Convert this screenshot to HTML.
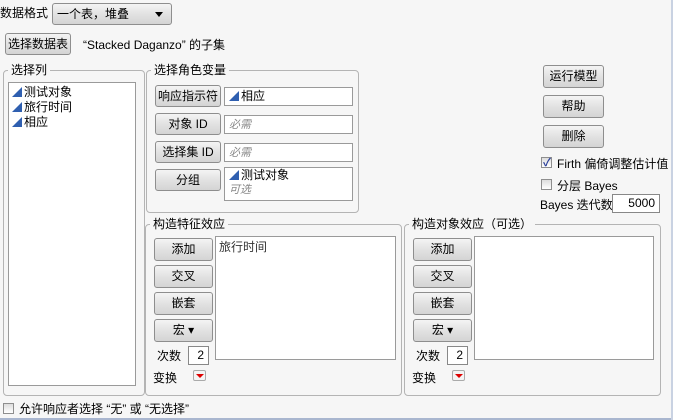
<!DOCTYPE html>
<html><head><meta charset="utf-8"><style>
*{box-sizing:border-box;margin:0;padding:0}
body{width:673px;height:420px;background:#f6f6f6;font-family:"Liberation Sans","Noto Sans CJK SC",sans-serif;font-size:12px;color:#000;position:relative;overflow:hidden}
.a{position:absolute;white-space:nowrap}
.btn{position:absolute;border:1px solid #8e8e8e;border-radius:3px;background:linear-gradient(#f4f4f4,#e2e2e2 50%,#d4d4d4);text-align:center;line-height:20px;font-size:12px}
.box{position:absolute;background:#fff;border:1px solid #9a9a9a}
.grp{position:absolute;border:1px solid #b4b4b4;border-radius:4px}
.lbl{position:absolute;background:#f6f6f6;padding:0 3px;top:-8px;left:4px;line-height:14px}
.tri{display:inline-block;width:0;height:0;border-left:10px solid transparent;border-bottom:10px solid #2f5fb0;margin-right:2px;vertical-align:-1px}
.it{color:#888;font-style:italic;font-size:11px}
.cb{position:absolute;width:11px;height:11px;border:1px solid #8e8e8e;background:linear-gradient(#ddd,#fff)}
.rd{position:absolute;width:13px;height:11px;border:1px solid #aaa;border-radius:2px;background:#f4f4f4}
.rd:after{content:"";position:absolute;left:2px;top:3px;border-left:4px solid transparent;border-right:4px solid transparent;border-top:4px solid #d00}
.num{position:absolute;background:#fff;border:1px solid #888;text-align:right;padding-right:4px;line-height:17px}
</style></head><body>
<div class="a" style="left:0;top:4px">数据格式</div>
<div class="btn" style="left:52px;top:3px;width:120px;height:22px;text-align:left;padding-left:4px">一个表，堆叠<span style="position:absolute;right:8px;top:8px;border-left:4px solid transparent;border-right:4px solid transparent;border-top:5px solid #000"></span></div>
<div class="btn" style="left:5px;top:33px;width:66px;height:22px">选择数据表</div>
<div class="a" style="left:83px;top:36px">“Stacked Daganzo” 的子集</div>

<div class="grp" style="left:3px;top:70px;width:142px;height:326px"><span class="lbl">选择列</span></div>
<div class="box" style="left:8px;top:82px;width:128px;height:304px;padding:2px 3px;line-height:15px">
<div><span class="tri"></span>测试对象</div><div><span class="tri"></span>旅行时间</div><div><span class="tri"></span>相应</div></div>

<div class="grp" style="left:146px;top:70px;width:213px;height:143px"><span class="lbl">选择角色变量</span></div>
<div class="btn" style="left:155px;top:85px;width:66px;height:22px">响应指示符</div>
<div class="btn" style="left:155px;top:113px;width:66px;height:22px">对象 ID</div>
<div class="btn" style="left:155px;top:141px;width:66px;height:22px">选择集 ID</div>
<div class="btn" style="left:155px;top:169px;width:66px;height:22px">分组</div>
<div class="box" style="left:224px;top:87px;width:129px;height:19px;padding-left:4px;line-height:17px"><span class="tri"></span>相应</div>
<div class="box" style="left:224px;top:115px;width:129px;height:19px;padding-left:4px;line-height:17px"><span class="it">必需</span></div>
<div class="box" style="left:224px;top:143px;width:129px;height:19px;padding-left:4px;line-height:17px"><span class="it">必需</span></div>
<div class="box" style="left:224px;top:167px;width:129px;height:34px;padding-left:4px;line-height:14px"><span class="tri"></span>测试对象<br><span class="it">可选</span></div>

<div class="btn" style="left:543px;top:65px;width:61px;height:23px">运行模型</div>
<div class="btn" style="left:543px;top:95px;width:61px;height:23px">帮助</div>
<div class="btn" style="left:543px;top:125px;width:61px;height:23px">删除</div>
<div class="cb" style="left:541px;top:157px"><span style="position:absolute;left:1px;top:-4px;color:#2a3f9a;font-size:11px;font-weight:bold">✓</span></div>
<div class="a" style="left:557px;top:155px">Firth 偏倚调整估计值</div>
<div class="cb" style="left:541px;top:179px"></div>
<div class="a" style="left:557px;top:177px">分层 Bayes</div>
<div class="a" style="left:540px;top:196px">Bayes 迭代数</div>
<div class="num" style="left:612px;top:194px;width:48px;height:19px">5000</div>

<div class="grp" style="left:145px;top:224px;width:257px;height:172px"><span class="lbl">构造特征效应</span></div>
<div class="btn" style="left:154px;top:238px;width:59px;height:23px">添加</div>
<div class="btn" style="left:154px;top:265px;width:59px;height:23px">交叉</div>
<div class="btn" style="left:154px;top:292px;width:59px;height:23px">嵌套</div>
<div class="btn" style="left:154px;top:319px;width:59px;height:23px">宏 ▾</div>
<div class="box" style="left:215px;top:236px;width:181px;height:124px;padding:1px 3px;color:#333">旅行时间</div>
<div class="a" style="left:157px;top:347px">次数</div>
<div class="num" style="left:188px;top:346px;width:21px;height:19px">2</div>
<div class="a" style="left:153px;top:369px">变换</div>
<div class="rd" style="left:193px;top:370px"></div>

<div class="grp" style="left:404px;top:224px;width:257px;height:172px"><span class="lbl">构造对象效应（可选）</span></div>
<div class="btn" style="left:413px;top:238px;width:59px;height:23px">添加</div>
<div class="btn" style="left:413px;top:265px;width:59px;height:23px">交叉</div>
<div class="btn" style="left:413px;top:292px;width:59px;height:23px">嵌套</div>
<div class="btn" style="left:413px;top:319px;width:59px;height:23px">宏 ▾</div>
<div class="box" style="left:474px;top:236px;width:180px;height:124px"></div>
<div class="a" style="left:416px;top:347px">次数</div>
<div class="num" style="left:447px;top:346px;width:21px;height:19px">2</div>
<div class="a" style="left:412px;top:369px">变换</div>
<div class="rd" style="left:452px;top:370px"></div>

<div class="cb" style="left:3px;top:403px"></div>
<div class="a" style="left:19px;top:400px">允许响应者选择 “无” 或 “无选择”</div>
<div style="position:absolute;left:0;top:418px;width:673px;height:2px;background:#a9b6cf"></div>
<div style="position:absolute;left:671px;top:0;width:2px;height:420px;background:#c9d2e2"></div>
</body></html>
